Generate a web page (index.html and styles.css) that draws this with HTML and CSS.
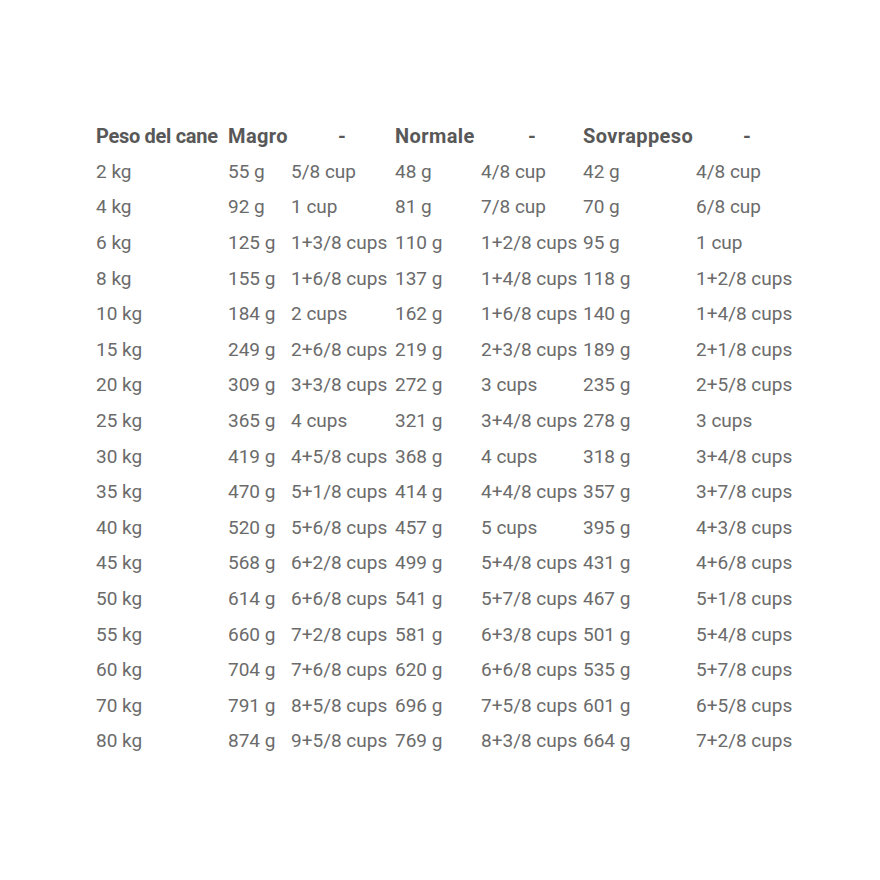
FILE: index.html
```html
<!DOCTYPE html>
<html lang="it">
<head>
<meta charset="utf-8">
<title>Tabella razione</title>
<link rel="stylesheet" href="styles.css">
</head>
<body>
<div class="page">
<table class="feed">
<colgroup>
<col class="c1"><col class="c2"><col class="c3"><col class="c4"><col class="c5"><col class="c6"><col class="c7">
</colgroup>
<thead>
<tr><th class="lead">Peso del cane</th><th>Magro</th><th class="dash">-</th><th>Normale</th><th class="dash">-</th><th>Sovrappeso</th><th class="dash">-</th></tr>
</thead>
<tbody>
<tr><td>2 kg</td><td>55 g</td><td>5/8 cup</td><td>48 g</td><td>4/8 cup</td><td>42 g</td><td>4/8 cup</td></tr>
<tr><td>4 kg</td><td>92 g</td><td>1 cup</td><td>81 g</td><td>7/8 cup</td><td>70 g</td><td>6/8 cup</td></tr>
<tr><td>6 kg</td><td>125 g</td><td>1+3/8 cups</td><td>110 g</td><td>1+2/8 cups</td><td>95 g</td><td>1 cup</td></tr>
<tr><td>8 kg</td><td>155 g</td><td>1+6/8 cups</td><td>137 g</td><td>1+4/8 cups</td><td>118 g</td><td>1+2/8 cups</td></tr>
<tr><td>10 kg</td><td>184 g</td><td>2 cups</td><td>162 g</td><td>1+6/8 cups</td><td>140 g</td><td>1+4/8 cups</td></tr>
<tr><td>15 kg</td><td>249 g</td><td>2+6/8 cups</td><td>219 g</td><td>2+3/8 cups</td><td>189 g</td><td>2+1/8 cups</td></tr>
<tr><td>20 kg</td><td>309 g</td><td>3+3/8 cups</td><td>272 g</td><td>3 cups</td><td>235 g</td><td>2+5/8 cups</td></tr>
<tr><td>25 kg</td><td>365 g</td><td>4 cups</td><td>321 g</td><td>3+4/8 cups</td><td>278 g</td><td>3 cups</td></tr>
<tr><td>30 kg</td><td>419 g</td><td>4+5/8 cups</td><td>368 g</td><td>4 cups</td><td>318 g</td><td>3+4/8 cups</td></tr>
<tr><td>35 kg</td><td>470 g</td><td>5+1/8 cups</td><td>414 g</td><td>4+4/8 cups</td><td>357 g</td><td>3+7/8 cups</td></tr>
<tr><td>40 kg</td><td>520 g</td><td>5+6/8 cups</td><td>457 g</td><td>5 cups</td><td>395 g</td><td>4+3/8 cups</td></tr>
<tr><td>45 kg</td><td>568 g</td><td>6+2/8 cups</td><td>499 g</td><td>5+4/8 cups</td><td>431 g</td><td>4+6/8 cups</td></tr>
<tr><td>50 kg</td><td>614 g</td><td>6+6/8 cups</td><td>541 g</td><td>5+7/8 cups</td><td>467 g</td><td>5+1/8 cups</td></tr>
<tr><td>55 kg</td><td>660 g</td><td>7+2/8 cups</td><td>581 g</td><td>6+3/8 cups</td><td>501 g</td><td>5+4/8 cups</td></tr>
<tr><td>60 kg</td><td>704 g</td><td>7+6/8 cups</td><td>620 g</td><td>6+6/8 cups</td><td>535 g</td><td>5+7/8 cups</td></tr>
<tr><td>70 kg</td><td>791 g</td><td>8+5/8 cups</td><td>696 g</td><td>7+5/8 cups</td><td>601 g</td><td>6+5/8 cups</td></tr>
<tr><td>80 kg</td><td>874 g</td><td>9+5/8 cups</td><td>769 g</td><td>8+3/8 cups</td><td>664 g</td><td>7+2/8 cups</td></tr>
</tbody>
</table>
</div>
</body>
</html>
```
FILE: styles.css
```css
html, body {
  margin: 0;
  padding: 0;
  background: #ffffff;
}
.page {
  padding: 118px 0 0 96px;
}
.feed {
  border-collapse: collapse;
  table-layout: fixed;
  font-family: Roboto, "Liberation Sans", sans-serif;
  font-size: 19px;
  color: #6b6b6b;
  width: 720px;
}
.c1 { width: 132px; }
.c2 { width: 63px; }
.c3 { width: 104px; }
.c4 { width: 86px; }
.c5 { width: 102px; }
.c6 { width: 113px; }
.c7 { width: 120px; }
.feed th, .feed td {
  padding: 0;
  height: 35.6px;
  text-align: left;
  white-space: nowrap;
  vertical-align: middle;
}
.feed th {
  font-weight: 700;
  font-size: 20px;
  letter-spacing: 0.4px;
  color: #585858;
}
.feed th.lead {
  letter-spacing: -0.3px;
}
.feed th.dash {
  padding-left: 47px;
}
```
